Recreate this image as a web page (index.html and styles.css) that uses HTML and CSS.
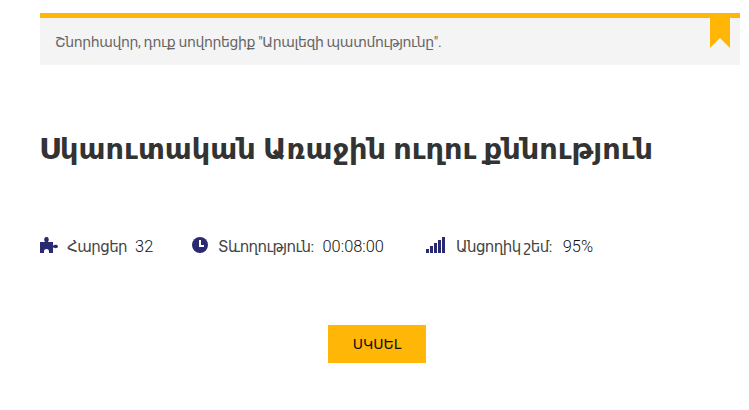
FILE: index.html
```html
<!DOCTYPE html>
<html lang="hy">
<head>
<meta charset="utf-8">
<title>Քննություն</title>
<link rel="stylesheet" href="styles.css">
</head>
<body>
<main class="page">
  <div class="notice">
    <p class="notice-text">Շնորհավոր, դուք սովորեցիք "Արալեզի պատմությունը".</p>
    <svg class="ribbon" viewBox="0 0 20 30" aria-hidden="true"><path d="M0 0H20V30L10 20L0 30Z"/></svg>
  </div>
  <h1 class="title">Սկաուտական Առաջին ուղու քննություն</h1>
  <ul class="stats">
    <li class="stat stat-questions">
      <svg class="icon icon-puzzle" viewBox="0 0 18 16" aria-hidden="true"><path d="M0 5H4.500C5 5 5 4.600 4.600 4C3.800 2.800 4.200 0 6.500 0S9.200 2.800 8.400 4C8 4.600 8 5 8.500 5H13V8C13 8.500 13.500 8.500 14 8.200C15.200 7.500 18 7.700 18 9.500S15.200 11.500 14 10.800C13.500 10.500 13 10.500 13 11V16H9V14.500C9 13.300 8.300 12 6.500 12S4 13.300 4 14.500V16H0Z"/></svg>
      <span class="label">Հարցեր</span><span>32</span>
    </li>
    <li class="stat stat-time">
      <svg class="icon icon-clock" viewBox="0 0 16 16" aria-hidden="true"><circle cx="8" cy="8" r="8"/><path class="hand" d="M7 3H9V8H12V10H7Z"/></svg>
      <span class="label">Տևողություն:</span><span>00:08:00</span>
    </li>
    <li class="stat stat-pass">
      <svg class="icon icon-bars" viewBox="0 0 19 16" aria-hidden="true"><path d="M0 12H3V16H0ZM4 9H7V16H4ZM8 6H11V16H8ZM12 3H15V16H12ZM16 0H19V16H16Z"/></svg>
      <span class="label">Անցողիկ շեմ:</span><span>95%</span>
    </li>
  </ul>
  <div class="actions"><button class="start" type="button">ՍԿՍԵԼ</button></div>
</main>
</body>
</html>
```

FILE: styles.css
```css
* { box-sizing: border-box; }
html, body { margin: 0; background: #fff; }
body {
  font-family: Roboto, "Open Sans", "DejaVu Sans", sans-serif;
  color: #333;
}
.page { padding: 13px 9px 47px 40px; }
.notice {
  position: relative;
  height: 52px;
  background: #f4f4f4;
  border-top: 5px solid #ffb606;
  padding: 0 15px;
  display: flex;
  align-items: center;
}
.notice-text { margin: 0; font-size: 14px; letter-spacing: -0.36px; color: #666; }
.ribbon { position: absolute; top: 0; right: 10px; width: 20px; height: 30px; fill: #ffb606; }
.title {
  margin: 66px 0 0 -1px;
  font-size: 28.8px;
  line-height: 36px;
  font-weight: 700;
  color: #333;
}
.stats {
  list-style: none;
  margin: 68px 0 0;
  padding: 0;
  display: flex;
  font-size: 16.400px;
  font-weight: 300;
  line-height: 24px;
  color: #111;
}
.stat { display: flex; align-items: center; gap: 8px; }
.label { font-size: 15px; font-weight: 400; letter-spacing: -0.55px; color: #444; }
.stat-questions { width: 152px; }
.stat-time { width: 234px; gap: 9px; }
.stat-time .icon { margin-right: 1px; }
.stat-pass { gap: 11px; }
.icon { fill: #2a2a72; flex: none; margin-top: -4px; }
.icon-puzzle { width: 18px; height: 16px; margin-right: 1px; }
.icon-clock { width: 16px; height: 16px; }
.icon-bars { width: 19px; height: 16px; }
.hand { fill: #fff; }
.actions { margin-top: 66px; padding-right: 26px; display: flex; justify-content: center; }
.start {
  width: 98px;
  height: 38px;
  border: 0;
  padding: 0;
  background: #ffb606;
  color: #111;
  font-family: inherit;
  font-size: 14px;
}
```
